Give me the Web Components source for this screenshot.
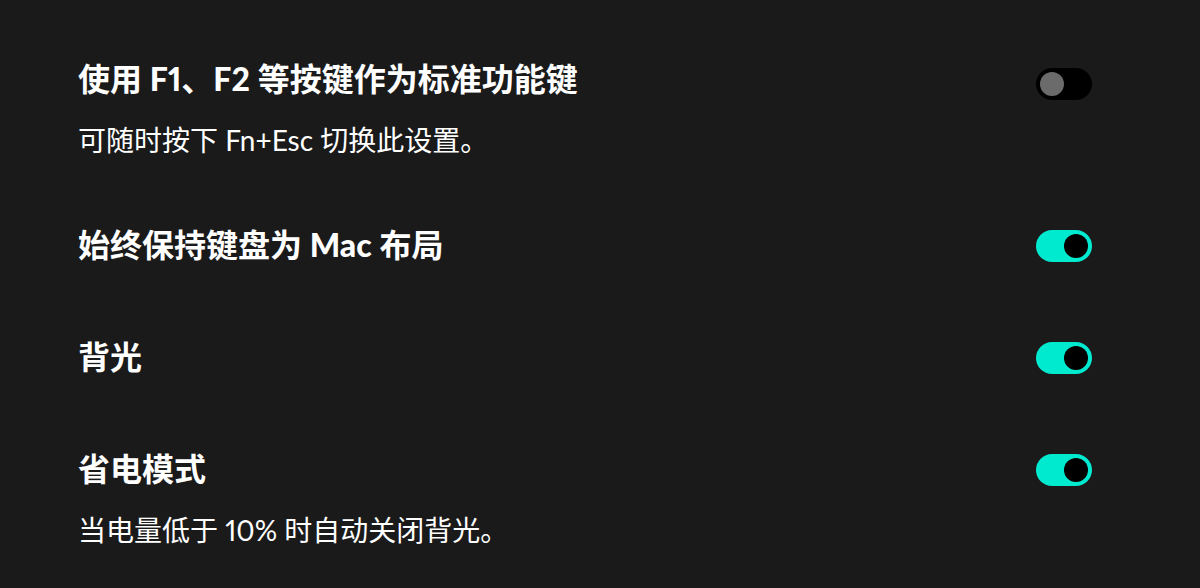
<!DOCTYPE html>
<html lang="zh-CN">
<head>
<meta charset="utf-8">
<title>键盘设置</title>
<style>
body { margin: 0; background: #1a1a1a; color: #fff; font-family: Lato, "Noto Sans CJK SC", sans-serif; }
</style>
</head>
<body>
<settings-panel>
  <setting-row tall label="使用 F1、F2 等按键作为标准功能键" note="可随时按下 Fn+Esc 切换此设置。"></setting-row>
  <setting-row label="始终保持键盘为 Mac 布局" checked></setting-row>
  <setting-row label="背光" checked></setting-row>
  <setting-row label="省电模式" note="当电量低于 10% 时自动关闭背光。" checked></setting-row>
</settings-panel>
<script>
class SettingsPanel extends HTMLElement {
  constructor() {
    super();
    this.attachShadow({ mode: "open" }).innerHTML = `
      <style>
        :host { display: block; padding: 60px 108px 40px 78px; }
        main { display: flex; flex-direction: column; gap: 72px; }
      </style>
      <main><slot></slot></main>`;
  }
}
// Fills an element with text, wrapping Latin runs so they can carry their own weight.
function fillText(element, text) {
  for (const part of text.split(/([A-Za-z0-9+%]+)/)) {
    if (/^[A-Za-z0-9+%]/.test(part)) {
      const span = document.createElement("span");
      span.textContent = part;
      element.append(span);
    } else {
      element.append(part);
    }
  }
}
class SettingRow extends HTMLElement {
  constructor() {
    super();
    this.attachShadow({ mode: "open" }).innerHTML = `
      <style>
        :host { display: flex; justify-content: space-between; align-items: flex-start; gap: 32px; }
        .text { display: flex; flex-direction: column; gap: 28px; }
        label { font-size: 32px; line-height: 38px; font-weight: 700; }
        label span { font-weight: 900; }
        p { margin: 0; font-size: 28px; line-height: 28px; font-weight: 400; }
        span { font-variant-numeric: proportional-nums; }
        .control { display: flex; align-items: center; height: 40px; flex: none; }
        :host([tall]) .control { height: 48px; }
        input {
          appearance: none; box-sizing: border-box; display: flex; align-items: center;
          width: 56px; height: 32px; margin: 0; padding: 4px; border-radius: 16px; background: #000;
        }
        input::before { content: ""; width: 24px; height: 24px; border-radius: 50%; background: #6b6b6b; }
        input:checked { background: #00ead0; justify-content: flex-end; }
        input:checked::before { background: #000; }
      </style>
      <div class="text"><label for="toggle"></label></div>
      <div class="control"><input type="checkbox" role="switch" id="toggle"></div>`;
  }
  connectedCallback() {
    const root = this.shadowRoot;
    const label = root.querySelector("label");
    if (label.hasChildNodes()) return;
    fillText(label, this.getAttribute("label"));
    root.querySelector("input").checked = this.hasAttribute("checked");
    if (this.hasAttribute("note")) {
      const p = document.createElement("p");
      p.id = "note";
      fillText(p, this.getAttribute("note"));
      root.querySelector(".text").append(p);
      root.querySelector("input").setAttribute("aria-describedby", "note");
    }
  }
}
customElements.define("settings-panel", SettingsPanel);
customElements.define("setting-row", SettingRow);
</script>
</body>
</html>
